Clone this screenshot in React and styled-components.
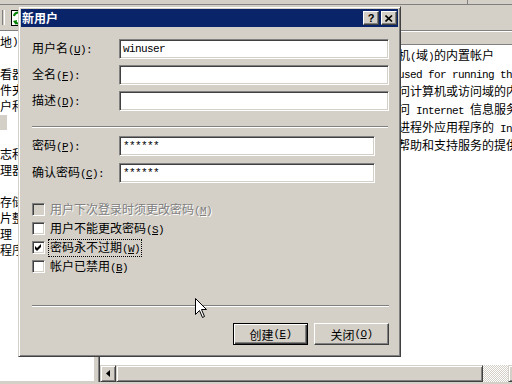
import React from 'react'
import styled, { createGlobalStyle } from 'styled-components'

const GlobalStyle = createGlobalStyle`
  html, body { margin: 0; padding: 0; }
  body {
    background: #d4d0c8;
    color: #000;
    font-family: "Noto Sans CJK SC", "Liberation Sans", sans-serif;
    font-size: 12px;
  }
`

const Screen = styled.div`
  position: relative;
  width: 512px;
  height: 384px;
  overflow: hidden;
  background: #d4d0c8;
  display: flex;
  flex-direction: column;
`

/* ---------- fenêtre MMC derrière ---------- */

const MenuStrip = styled.div`
  height: 4px;
  display: flex;
  border-bottom: 1px solid #808080;
`

const MenuCell = styled.div`
  width: 467px;
  border-right: 1px solid #808080;
`

const ToolStrip = styled.div`
  height: 25px;
  display: flex;
  align-items: center;
  padding-left: 2px;
  gap: 6px;
`

const Grip = styled.div`
  width: 1px;
  height: 15px;
  border-left: 1px solid #808080;
  border-right: 1px solid #fff;
`

const Panes = styled.div`
  flex: 1;
  display: flex;
  padding-bottom: 2px;
  min-height: 0;
`

const TreePane = styled.div`
  width: 94px;
  background: #fff;
  border-top: 1px solid #808080;
  border-right: 1px solid #d4d0c8;
  border-bottom: 1px solid #d4d0c8;
  padding-top: 3px;
  overflow: hidden;
`

const TreeRow = styled.div`
  height: 16px;
  line-height: 16px;
  white-space: nowrap;
  display: flex;
  align-items: center;
`

const TreeSel = styled.span`
  width: 7px;
  height: 15px;
  background: #d4d0c8;
`

const Splitter = styled.div`
  width: 3px;
  border-right: 1px solid #808080;
`

const ListPane = styled.div`
  flex: 1;
  display: flex;
  flex-direction: column;
  background: #fff;
  border-top: 1px solid #808080;
  border-left: 1px solid #404040;
  min-width: 0;
`

const ListHeader = styled.div`
  height: 13px;
  background: #d4d0c8;
  border-bottom: 1px solid #808080;
  box-shadow: inset 0 1px #fff;
`

const ListBody = styled.div`
  flex: 1;
  overflow: hidden;
`

const ListRow = styled.div`
  height: 18px;
  display: flex;
  align-items: center;
  white-space: nowrap;
`

const NameCell = styled.span`
  width: 250px;
  flex-shrink: 0;
  overflow: hidden;
`

const Mono = styled.span`
  font-family: "Liberation Mono", "DejaVu Sans Mono", monospace;
  font-size: 11px;
  letter-spacing: -0.6px;
`

const Scrollbar = styled.div`
  height: 17px;
  display: flex;
  overflow: hidden;
  background: #d4d0c8;
  box-shadow: inset 0 1px #fff;
`

const Raised = styled.div`
  flex-shrink: 0;
  box-sizing: border-box;
  width: ${p => p.$w}px;
  border-style: solid;
  border-width: 1px;
  border-color: #d4d0c8 #404040 #404040 #d4d0c8;
  box-shadow: inset 1px 1px #fff, inset -1px -1px #808080;
  display: flex;
  align-items: center;
  justify-content: center;
`

const Track = styled.div`
  flex-shrink: 0;
  width: 25px;
  background: repeating-conic-gradient(#d4d0c8 0 25%, #fff 0 50%) 0 0 / 2px 2px;
`

/* ---------- boîte de dialogue ---------- */

const Dialog = styled.div`
  position: absolute;
  left: 18px;
  top: 6px;
  width: 383px;
  height: 351px;
  box-sizing: border-box;
  background: #d4d0c8;
  border: 1px solid;
  border-color: #d4d0c8 #404040 #404040 #d4d0c8;
  box-shadow: inset 1px 1px #fff, inset -1px -1px #808080;
  padding: 2px;
  display: flex;
  flex-direction: column;
`

const TitleBar = styled.div`
  height: 18px;
  flex-shrink: 0;
  background: #0a246a;
  display: flex;
  align-items: center;
  padding: 0 1px 0 1px;
  gap: 2px;
`

const Title = styled.span`
  flex: 1;
  color: #fff;
  font-weight: bold;
  font-size: 12px;
  line-height: 18px;
`

const CapButton = styled.div`
  width: 16px;
  height: 14px;
  box-sizing: border-box;
  background: #d4d0c8;
  border: 1px solid;
  border-color: #fff #404040 #404040 #fff;
  box-shadow: inset -1px -1px #808080;
  display: flex;
  align-items: center;
  justify-content: center;
  font-family: "Liberation Sans", sans-serif;
  font-weight: bold;
  font-size: 11px;
  line-height: 1;
`

const Body = styled.div`
  display: flex;
  flex-direction: column;
  padding: 12px 9px 0 11px;
`

const FieldRow = styled.div`
  display: flex;
  align-items: center;
  height: 20px;
  margin-bottom: ${p => p.$gap}px;
`

const Label = styled.span`
  width: 87px;
  flex-shrink: 0;
  white-space: nowrap;
  line-height: 16px;
`

const TextBox = styled.div`
  box-sizing: border-box;
  height: 20px;
  ${p => (p.$w ? `width: ${p.$w}px;` : 'flex: 1;')}
  background: #fff;
  border: 1px solid;
  border-color: #808080 #fff #fff #808080;
  box-shadow: inset 1px 1px #404040, inset -1px -1px #d4d0c8;
  padding: 0 3px;
  display: flex;
  align-items: center;
`

const Separator = styled.div`
  height: 0;
  border-top: 1px solid #808080;
  border-bottom: 1px solid #fff;
  margin: ${p => p.$m};
`

const CheckRow = styled.div`
  height: 19px;
  display: flex;
  align-items: center;
  gap: 5px;
  white-space: nowrap;
  color: ${p => (p.$disabled ? '#808080' : '#000')};
  text-shadow: ${p => (p.$disabled ? '1px 1px #fff' : 'none')};
`

const Box = styled.span`
  width: 13px;
  height: 13px;
  box-sizing: border-box;
  background: ${p => (p.$disabled ? '#d4d0c8' : '#fff')};
  border: 1px solid;
  border-color: #808080 #fff #fff #808080;
  box-shadow: inset 1px 1px #404040, inset -1px -1px #d4d0c8;
  display: flex;
  align-items: center;
  justify-content: center;
`

const CheckText = styled.span`
  line-height: 14px;
  padding: 0 1px;
  margin-left: -1px;
  outline: ${p => (p.$focus ? '1px dotted #000' : 'none')};
  outline-offset: 0;
`

const ButtonRow = styled.div`
  display: flex;
  justify-content: flex-end;
  gap: 6px;
  margin-top: 16px;
`

const PushButton = styled.div`
  width: 75px;
  height: 22px;
  box-sizing: border-box;
  border: 1px solid;
  border-color: ${p => (p.$default ? '#000' : '#fff #404040 #404040 #fff')};
  box-shadow: ${p =>
    p.$default
      ? 'inset 1px 1px #fff, inset -1px -1px #404040, inset -2px -2px #808080'
      : 'inset -1px -1px #808080'};
  display: flex;
  align-items: center;
  justify-content: center;
  white-space: nowrap;
`

const Cursor = styled.svg`
  position: absolute;
  left: 195px;
  top: 298px;
`

function Key({ k }) {
  return (
    <Mono>
      (<u>{k}</u>)
    </Mono>
  )
}

function CheckBox({ label, k, checked, disabled, focus }) {
  return (
    <CheckRow $disabled={disabled}>
      <Box $disabled={disabled}>
        {checked && (
          <svg width="7" height="7" viewBox="0 0 7 7">
            <polygon points="0,2 2,4 6,0 6,3 2,7 0,5" fill="#000" />
          </svg>
        )}
      </Box>
      <CheckText $focus={focus}>
        {label}
        <Key k={k} />
      </CheckText>
    </CheckRow>
  )
}

const treeRows = ['地)', '', '看器', '件夹', '户和组', 'sel', '', '志和警报', '理器', '', '存储', '片整理程序', '理', '程序']

const users = [
  ['Administrator', '管理计算机(域)的内置帐户'],
  ['ASPNET', ' Account used for running the ASP.NET worker process'],
  ['Guest', '供来宾访问计算机或访问域的内置帐户'],
  ['IUSR_WIN2003', '供匿名访问 Internet 信息服务的内置帐户'],
  ['IWAM_WIN2003', '用于启动进程外应用程序的 Internet 信息服务的内置帐户'],
  ['SUPPORT_388945a0', '这是一个帮助和支持服务的提供商帐户'],
]

// découpe le texte latin / chinois pour la police à demi-chasse
function Mixed({ text }) {
  const parts = text.split(/([\x20-\x7e]+)/).filter(Boolean)
  return parts.map((p, i) => (/^[\x20-\x7e]+$/.test(p) ? <Mono key={i}>{p}</Mono> : <span key={i}>{p}</span>))
}

export default function App() {
  return (
    <Screen>
      <GlobalStyle />
      <MenuStrip>
        <MenuCell />
      </MenuStrip>
      <ToolStrip>
        <Grip />
        <svg width="16" height="16" viewBox="0 0 16 16">
          <rect x="0.5" y="0.5" width="13" height="15" fill="#fff" stroke="#000" />
          <path d="M3 6 A4 4 0 0 1 10 4" fill="none" stroke="#008000" strokeWidth="2" />
          <path d="M11 10 A4 4 0 0 1 4 12" fill="none" stroke="#008000" strokeWidth="2" />
          <polygon points="9,1 12,5 8,6" fill="#008000" />
          <polygon points="5,15 2,11 6,10" fill="#008000" />
        </svg>
      </ToolStrip>
      <Panes>
        <TreePane>
          {treeRows.map((t, i) => (
            <TreeRow key={i}>{t === 'sel' ? <TreeSel /> : <Mixed text={t} />}</TreeRow>
          ))}
        </TreePane>
        <Splitter />
        <ListPane>
          <ListHeader />
          <ListBody>
            {users.map(([name, desc]) => (
              <ListRow key={name}>
                <NameCell>
                  <Mono>{name}</Mono>
                </NameCell>
                <span>
                  <Mixed text={desc} />
                </span>
              </ListRow>
            ))}
          </ListBody>
          <Scrollbar>
            <Raised $w={16}>
              <svg width="4" height="7" viewBox="0 0 4 7">
                <polygon points="4,0 4,7 0,3.5" fill="#000" />
              </svg>
            </Raised>
            <Raised $w={367} />
            <Track />
            <Raised $w={16} />
          </Scrollbar>
        </ListPane>
      </Panes>

      <Dialog>
        <TitleBar>
          <Title>新用户</Title>
          <CapButton>?</CapButton>
          <CapButton>
            <svg width="8" height="7" viewBox="0 0 8 7">
              <path d="M0.5 0.5 L7 6.5 M7 0.5 L0.5 6.5" stroke="#000" strokeWidth="1.6" />
            </svg>
          </CapButton>
        </TitleBar>
        <Body>
          <FieldRow $gap={6}>
            <Label>
              用户名<Key k="U" />
              <Mono>:</Mono>
            </Label>
            <TextBox>
              <Mono>winuser</Mono>
            </TextBox>
          </FieldRow>
          <FieldRow $gap={6}>
            <Label>
              全名<Key k="F" />
              <Mono>:</Mono>
            </Label>
            <TextBox />
          </FieldRow>
          <FieldRow $gap={0}>
            <Label>
              描述<Key k="D" />
              <Mono>:</Mono>
            </Label>
            <TextBox />
          </FieldRow>
          <Separator $m="15px 1px 8px 0" />
          <FieldRow $gap={7}>
            <Label>
              密码<Key k="P" />
              <Mono>:</Mono>
            </Label>
            <TextBox $w={256}>
              <Mono>******</Mono>
            </TextBox>
          </FieldRow>
          <FieldRow $gap={17}>
            <Label>
              确认密码<Key k="C" />
              <Mono>:</Mono>
            </Label>
            <TextBox $w={256}>
              <Mono>******</Mono>
            </TextBox>
          </FieldRow>
          <CheckBox label="用户下次登录时须更改密码" k="M" disabled />
          <CheckBox label="用户不能更改密码" k="S" />
          <CheckBox label="密码永不过期" k="W" checked focus />
          <CheckBox label="帐户已禁用" k="B" />
          <Separator $m="29px 0 0 0" />
          <ButtonRow>
            <PushButton $default>
              创建<Key k="E" />
            </PushButton>
            <PushButton>
              关闭<Key k="O" />
            </PushButton>
          </ButtonRow>
        </Body>
      </Dialog>

      <Cursor width="12" height="21" viewBox="0 0 12 21">
        <path d="M0.5 0.5 L0.5 16.5 L4.5 12.5 L7.5 19.5 L9.5 18.5 L6.5 11.5 L11.5 11.5 Z" fill="#fff" stroke="#000" />
      </Cursor>
    </Screen>
  )
}
